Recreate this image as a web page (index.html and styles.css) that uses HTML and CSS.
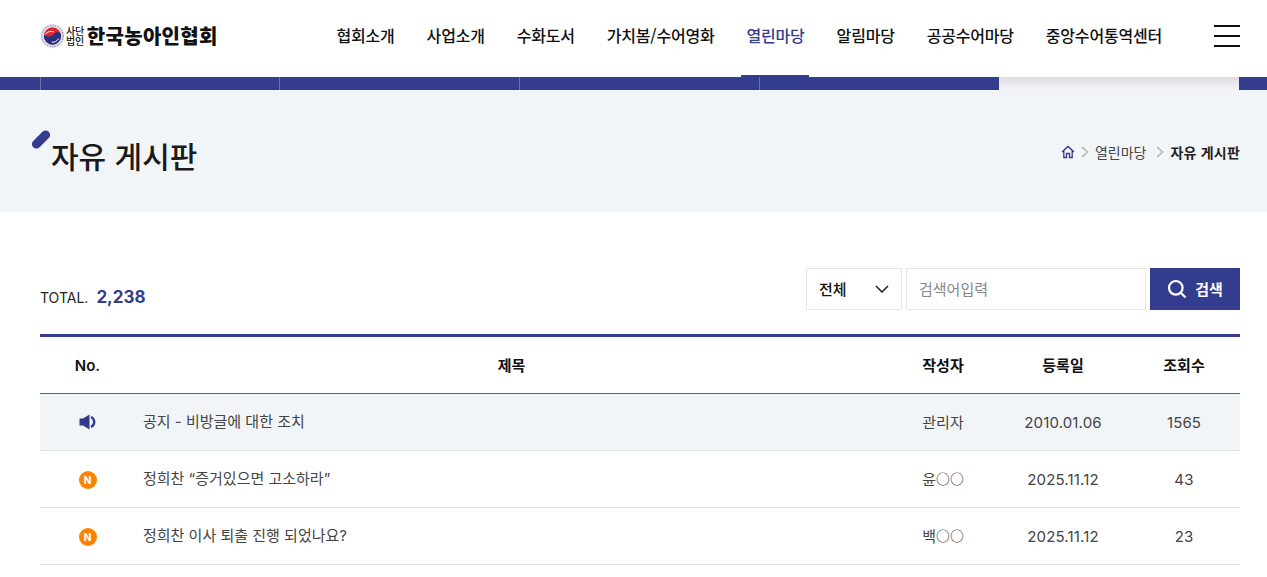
FILE: index.html
```html
<!DOCTYPE html>
<html lang="ko">
<head>
<meta charset="utf-8">
<title>자유 게시판</title>
<link rel="stylesheet" href="styles.css">
</head>
<body>
<header class="header">
  <a class="logo">
    <svg class="emblem" width="25" height="26" viewBox="0 0 26 26">
      <circle cx="13" cy="13" r="12.500" fill="#e4e7f2"/>
      <circle cx="13" cy="13" r="11" fill="none" stroke="#9aa2c8" stroke-width="1.500" stroke-dasharray="1.500 1.200"/>
      <circle cx="13" cy="13" r="9" fill="#e0262c"/>
      <path d="M4 13a9 9 0 0 0 18 0c0-.8-.2-1.500-.4-2-1.800-2.400-5.400-2.400-7.400.2C12 13.800 8 14.400 5.600 12.600 4.800 12 4.200 12 4 13z" fill="#26307f"/>
      <path d="M5.500 11.500c2-3 5.500-4 9-2.700" fill="none" stroke="#fff" stroke-width="1"/>
      <path d="M12 19.500c3 .4 6-1.200 7.500-4" fill="none" stroke="#fff" stroke-width="1"/>
    </svg>
    <span class="corp">사단<br>법인</span>
    <span class="logo-name">한국농아인협회</span>
  </a>
  <nav class="gnb">
    <a>협회소개</a>
    <a>사업소개</a>
    <a>수화도서</a>
    <a>가치봄/수어영화</a>
    <a class="on">열린마당</a>
    <a>알림마당</a>
    <a>공공수어마당</a>
    <a>중앙수어통역센터</a>
  </nav>
  <button class="burger" aria-label="메뉴"><i></i><i></i><i></i></button>
</header>
<div class="strip">
  <div class="strip-pad"></div>
  <div class="strip-cell strip-first"></div>
  <div class="strip-cell"></div>
  <div class="strip-cell"></div>
  <div class="strip-cell"></div>
  <div class="strip-gap"></div>
</div>
<section class="hero">
  <h1 class="title">자유 게시판</h1>
  <div class="crumbs">
    <svg width="14" height="14" viewBox="0 0 14 14" fill="none" stroke="#33398c" stroke-width="1.300"><path d="M1 7 7 1.500 13 7M2.800 5.800V12.500H5.500V8.500H8.500V12.500H11.200V5.800"/></svg>
    <svg class="sep" width="8" height="12" viewBox="0 0 8 12" fill="none" stroke="#aaa" stroke-width="1.200"><path d="M1 1l5.500 5L1 11"/></svg>
    <span>열린마당</span>
    <svg class="sep sep-wide" width="8" height="12" viewBox="0 0 8 12" fill="none" stroke="#aaa" stroke-width="1.200"><path d="M1 1l5.500 5L1 11"/></svg>
    <strong>자유 게시판</strong>
  </div>
</section>
<main class="board">
  <div class="board-top">
    <div class="total"><span>TOTAL.</span><b>2,238</b></div>
    <form class="search">
      <div class="select"><span>전체</span><svg width="14" height="8" viewBox="0 0 14 8" fill="none" stroke="#222" stroke-width="1.500"><path d="M1 1l6 6 6-6"/></svg></div>
      <div class="input">검색어입력</div>
      <button class="btn" type="button"><svg width="20" height="20" viewBox="0 0 20 20" fill="none" stroke="#fff" stroke-width="2.200"><circle cx="8.800" cy="8.800" r="6.800"/><path d="M13.800 13.800 18.500 18.500"/></svg>검색</button>
    </form>
  </div>
  <table class="list">
    <colgroup><col class="c1"><col class="c2"><col class="c3"><col class="c4"><col class="c5"></colgroup>
    <thead>
      <tr><th class="no">No.</th><th>제목</th><th>작성자</th><th>등록일</th><th>조회수</th></tr>
    </thead>
    <tbody>
      <tr class="notice">
        <td><svg class="ico" width="18" height="16" viewBox="0 0 18 16"><path d="M.5 4.500H4L10.500 .5V15.500L4 11.500H.5z" fill="#33398c"/><path d="M12 3a5.500 5.500 0 0 1 0 10" fill="none" stroke="#33398c" stroke-width="2.400"/></svg></td>
        <td class="subj">공지 - 비방글에 대한 조치</td><td class="writer">관리자</td><td class="num">2010.01.06</td><td class="num">1565</td>
      </tr>
      <tr>
        <td><span class="new">N</span></td>
        <td class="subj">정희찬 “증거있으면 고소하라”</td><td class="writer">윤<span class="mask">○○</span></td><td class="num">2025.11.12</td><td class="num">43</td>
      </tr>
      <tr>
        <td><span class="new">N</span></td>
        <td class="subj">정희찬 이사 퇴출 진행 되었나요?</td><td class="writer">백<span class="mask">○○</span></td><td class="num">2025.11.12</td><td class="num">23</td>
      </tr>
    </tbody>
  </table>
</main>
</body>
</html>
```
FILE: styles.css
```css
* { box-sizing: border-box; }
html, body { margin: 0; padding: 0; }
body {
  font-family: "Inter", "Noto Sans CJK KR", sans-serif;
  color: #222;
  background: #fff;
  overflow: hidden;
  height: 577px;
}
.header {
  height: 77px;
  padding: 0 27px 5px 40px;
  display: flex;
  align-items: center;
}
.logo { display: flex; align-items: center; color: #111; }
.emblem { margin-right: 1px; }
.corp {
  font-family: "Noto Sans CJK KR", sans-serif;
  font-size: 10px;
  line-height: 10px;
  margin-right: 3px;
  font-weight: 500;
  letter-spacing: -.3px;
}
.logo-name {
  font-family: "Noto Sans CJK KR", sans-serif;
  font-size: 20px;
  line-height: 24px;
  font-weight: 900;
  letter-spacing: .3px;
}
.gnb {
  display: flex;
  gap: 32px;
  margin-left: auto;
  font-family: "Noto Sans CJK KR", sans-serif;
  font-size: 16px;
  line-height: 24px;
  font-weight: 500;
  color: #111;
  align-items: center;
}
.gnb a { position: relative; white-space: nowrap; letter-spacing: -.2px; top: -1px; }
.gnb .on { color: #333c8d; }
.gnb .on::after {
  content: "";
  position: absolute;
  left: -6px;
  right: -4px;
  top: 52px;
  height: 2px;
  background: #333c8d;
}
.burger {
  width: 26px;
  height: 22px;
  margin-left: 52px;
  padding: 0;
  border: 0;
  background: none;
  display: flex;
  flex-direction: column;
  justify-content: space-between;
}
.burger i { display: block; height: 2px; background: #111; }
.strip { display: flex; height: 13px; background: #333c8d; }
.strip-pad { width: 40px; }
.strip-cell { width: 240px; border-left: 1px solid #6b73b3; }
.strip-first { width: 239px; }
.strip-gap {
  width: 240px;
  background: linear-gradient(#dcdee3, #f2f5f8);
}
.hero {
  height: 122px;
  background: #f2f5f8;
  padding: 0 27px 0 51px;
  display: flex;
  align-items: center;
  justify-content: space-between;
}
.title {
  margin: 8px 0 0;
  font-family: "Noto Sans CJK KR", sans-serif;
  font-size: 30px;
  font-weight: 500;
  color: #1a1a1a;
  position: relative;
}
.title::before {
  content: "";
  position: absolute;
  left: -21px;
  top: 2px;
  width: 22px;
  height: 9px;
  border-radius: 5px;
  background: #333c8d;
  transform: rotate(-45deg);
}
.crumbs {
  display: flex;
  align-items: center;
  margin-top: 2px;
  font-family: "Noto Sans CJK KR", sans-serif;
  font-size: 14px;
  color: #444;
}
.sep { margin: 0 6px; }
.sep-wide { margin: 0 6px 0 10px; }
.crumbs strong { color: #222; font-weight: 700; font-size: 14px; letter-spacing: .2px; }
.board { padding: 56px 27px 0 40px; }
.board-top {
  display: flex;
  justify-content: space-between;
  align-items: center;
  height: 42px;
  margin-bottom: 24px;
}
.total { display: flex; align-items: baseline; gap: 8px; font-size: 14px; color: #222; margin-top: 15px; }
.total b { font-size: 17px; font-weight: 700; color: #333c8d; }
.search { display: flex; gap: 4px; height: 42px; font-family: "Noto Sans CJK KR", sans-serif; font-size: 15px; line-height: 20px; }
.select {
  width: 96px;
  border: 1px solid #e3e5e9;
  display: flex;
  align-items: center;
  justify-content: space-between;
  padding: 0 12px;
  color: #111;
  font-weight: 500;
}
.input {
  width: 240px;
  border: 1px solid #e3e5e9;
  display: flex;
  align-items: center;
  padding: 0 12px;
  color: #888;
}
.btn {
  width: 90px;
  border: 0;
  padding: 0;
  background: #333c8d;
  color: #fff;
  font: 700 15px/20px "Noto Sans CJK KR", sans-serif;
  display: flex;
  align-items: center;
  justify-content: center;
  gap: 8px;
}
.list {
  width: 1200px;
  table-layout: fixed;
  border-collapse: separate;
  border-spacing: 0;
  border-top: 3px solid #333c8d;
  font-size: 15px;
}
.c1 { width: 95px; }
.c2 { width: 753px; }
.c3 { width: 110px; }
.c4 { width: 130px; }
.c5 { width: 112px; }
.list th {
  height: 57px;
  border-bottom: 1px solid #666;
  font-size: 15px;
  font-weight: 600;
  color: #111;
  padding: 0 0 1px;
}
.list .no { padding: 1px 0 0; }
.list td {
  height: 57px;
  border-bottom: 1px solid #dfe1e5;
  text-align: center;
  color: #444;
  padding: 0;
}
.list .subj { text-align: left; padding: 0 0 3px 8px; }
.list .writer { padding-bottom: 2px; }
.list .num { letter-spacing: .15px; }
.mask { font-family: "Noto Sans CJK KR", sans-serif; font-size: 13.800px; font-weight: 700; position: relative; top: -1px; }
.notice td { background: #f2f5f8; }
.ico { display: block; margin: 0 auto; }
.new {
  display: inline-flex;
  width: 18px;
  height: 18px;
  border-radius: 50%;
  background: #ff8200;
  color: #fff;
  font-size: 10px;
  font-weight: 800;
  align-items: center;
  justify-content: center;
  vertical-align: middle;
}
```
